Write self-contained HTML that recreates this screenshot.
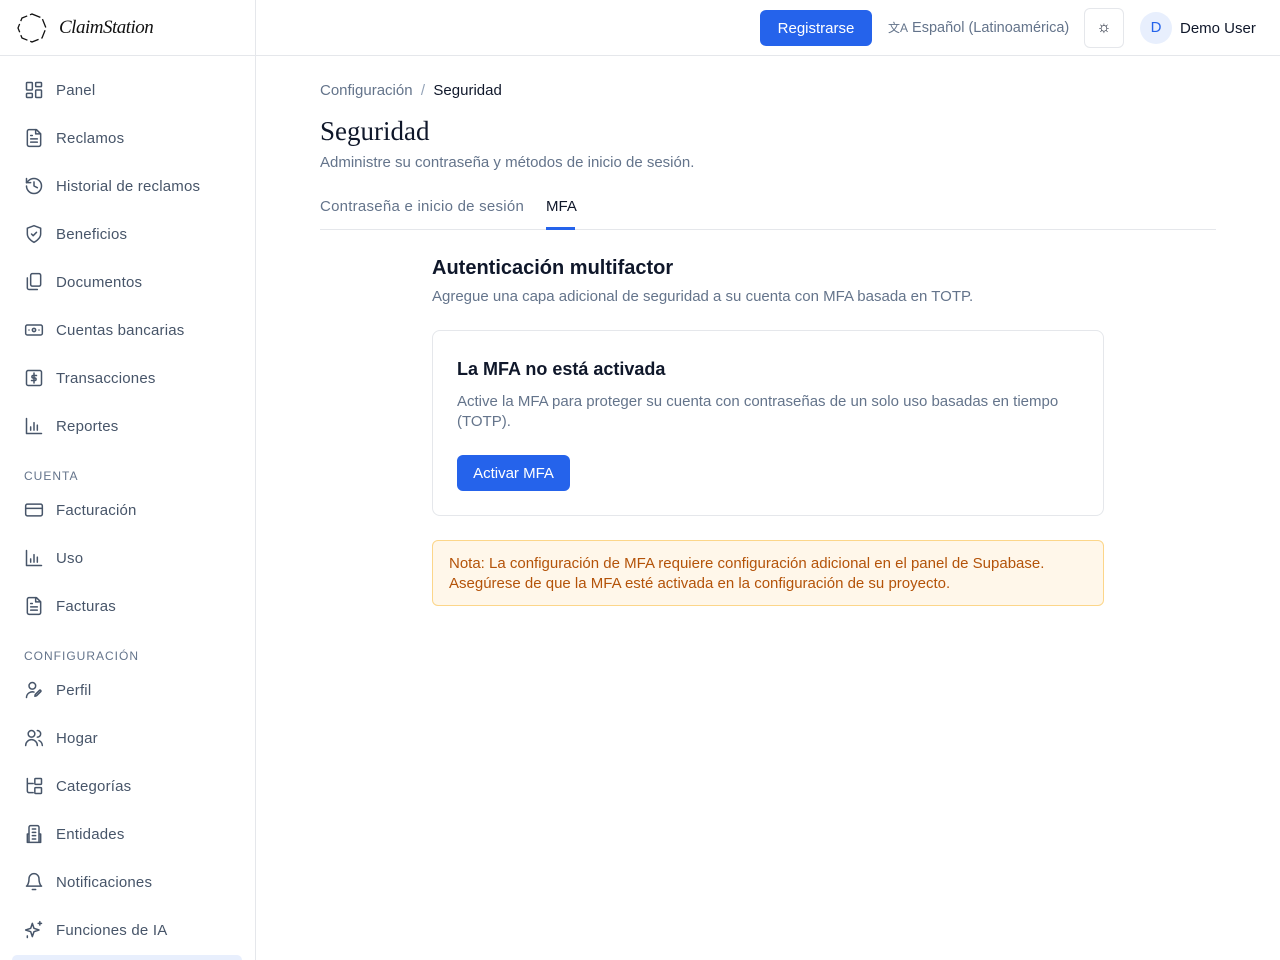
<!DOCTYPE html>
<html><head><meta charset="utf-8"><style>
*{box-sizing:border-box;margin:0;padding:0}
html,body{width:1280px;height:960px;overflow:hidden}
body{font-family:"Liberation Sans",sans-serif;background:#fff;color:#0f172a;position:relative}
.side{position:absolute;left:0;top:0;width:256px;height:960px;border-right:1px solid #e5e7eb;background:#fff;overflow:hidden}
.logo{height:56px;border-bottom:1px solid #e5e7eb;display:flex;align-items:center;padding-left:17px}
.logo span{font-family:"Liberation Serif",serif;font-style:italic;font-size:19px;margin-left:12px;color:#111;letter-spacing:-0.5px}
.item{position:absolute;left:24px;display:flex;align-items:center;font-size:15px;color:#475569;letter-spacing:.2px}
.item svg{width:20px;height:20px;margin-right:12px;fill:none;stroke:#475569;stroke-width:1.8;stroke-linecap:round;stroke-linejoin:round}
.sec{position:absolute;left:24px;font-size:12px;color:#64748b;letter-spacing:1px}
.top{position:absolute;left:256px;right:0;top:0;height:56px;border-bottom:1px solid #e5e7eb}
.btn{position:absolute;background:#2563eb;color:#fff;border-radius:6px;font-size:15px;display:flex;align-items:center;justify-content:center}
</style></head><body>
<div class="side">
<div class="logo"><svg width="30" height="30" viewBox="0 0 30 30"><path d="M15 1 L25 5 L29 15 L25 25 L15 29 L5 25 L1 15 L5 5 Z" fill="none" stroke="#111" stroke-width="1.3" stroke-dasharray="9 3"/></svg><span>ClaimStation</span></div>
<div class="item" style="top:80px"><svg viewBox="0 0 24 24"><rect x="3" y="3" width="7" height="9" rx="1"/><rect x="14" y="3" width="7" height="5" rx="1"/><rect x="14" y="12" width="7" height="9" rx="1"/><rect x="3" y="16" width="7" height="5" rx="1"/></svg>Panel</div>
<div class="item" style="top:128px"><svg viewBox="0 0 24 24"><path d="M15 2H6a2 2 0 0 0-2 2v16a2 2 0 0 0 2 2h12a2 2 0 0 0 2-2V7z"/><path d="M14 2v5h5M8 13h8M8 17h8M8 9h2"/></svg>Reclamos</div>
<div class="item" style="top:176px"><svg viewBox="0 0 24 24"><path d="M3 12a9 9 0 1 0 9-9 9.7 9.7 0 0 0-6.7 2.7L3 8"/><path d="M3 3v5h5M12 7v5l4 2"/></svg>Historial de reclamos</div>
<div class="item" style="top:224px"><svg viewBox="0 0 24 24"><path d="M12 22s8-4 8-10V5l-8-3-8 3v7c0 6 8 10 8 10z"/><path d="m9 12 2 2 4-4"/></svg>Beneficios</div>
<div class="item" style="top:272px"><svg viewBox="0 0 24 24"><rect x="8" y="2" width="12" height="15" rx="2"/><path d="M4 7v12a2 2 0 0 0 2 2h10"/></svg>Documentos</div>
<div class="item" style="top:320px"><svg viewBox="0 0 24 24"><rect x="2" y="6" width="20" height="12" rx="2"/><circle cx="12" cy="12" r="2"/><path d="M6 12h.01M18 12h.01"/></svg>Cuentas bancarias</div>
<div class="item" style="top:368px"><svg viewBox="0 0 24 24"><rect x="3" y="3" width="18" height="18" rx="2"/><path d="M12 6v12M15 9h-4a1.5 1.5 0 0 0 0 3h2a1.5 1.5 0 0 1 0 3H9"/></svg>Transacciones</div>
<div class="item" style="top:416px"><svg viewBox="0 0 24 24"><path d="M3 3v18h18M8 17v-4M12 17V8M16 17v-6"/></svg>Reportes</div>
<div class="sec" style="top:469px">CUENTA</div>
<div class="item" style="top:500px"><svg viewBox="0 0 24 24"><rect x="2" y="5" width="20" height="14" rx="2"/><path d="M2 10h20"/></svg>Facturación</div>
<div class="item" style="top:548px"><svg viewBox="0 0 24 24"><path d="M3 3v18h18M8 17v-4M12 17V8M16 17v-6"/></svg>Uso</div>
<div class="item" style="top:596px"><svg viewBox="0 0 24 24"><path d="M15 2H6a2 2 0 0 0-2 2v16a2 2 0 0 0 2 2h12a2 2 0 0 0 2-2V7z"/><path d="M14 2v5h5M8 13h8M8 17h8M8 9h2"/></svg>Facturas</div>
<div class="sec" style="top:649px">CONFIGURACIÓN</div>
<div class="item" style="top:680px"><svg viewBox="0 0 24 24"><circle cx="10" cy="7" r="4"/><path d="M3 21a7 7 0 0 1 9-6.5M20 14l-5 5-2 .5.5-2 5-5a1 1 0 0 1 1.5 1.5z"/></svg>Perfil</div>
<div class="item" style="top:728px"><svg viewBox="0 0 24 24"><circle cx="9" cy="7" r="4"/><path d="M2 21a7 7 0 0 1 14 0M16 3a4 4 0 0 1 0 8M22 21a7 7 0 0 0-4-6"/></svg>Hogar</div>
<div class="item" style="top:776px"><svg viewBox="0 0 24 24"><path d="M4 3v15a2 2 0 0 0 2 2h5M4 9h7"/><rect x="13" y="3" width="8" height="7" rx="1"/><rect x="13" y="14" width="8" height="7" rx="1"/></svg>Categorías</div>
<div class="item" style="top:824px"><svg viewBox="0 0 24 24"><path d="M6 22V4a2 2 0 0 1 2-2h8a2 2 0 0 1 2 2v18zM6 12H4v10h16V12h-2M10 6h4M10 10h4M10 14h4M10 18h4"/></svg>Entidades</div>
<div class="item" style="top:872px"><svg viewBox="0 0 24 24"><path d="M6 8a6 6 0 0 1 12 0c0 7 3 9 3 9H3s3-2 3-9M10 21h4"/></svg>Notificaciones</div>
<div class="item" style="top:920px"><svg viewBox="0 0 24 24"><path d="M10 4l2 6 6 2-6 2-2 6-2-6-6-2 6-2zM19 2v4M17 4h4M4 19v2"/></svg>Funciones de IA</div>
<div style="position:absolute;left:12px;top:955px;width:230px;height:10px;background:#e8effd;border-radius:8px"></div>
</div>
<div class="top">
<div class="btn" style="left:504px;top:10px;width:112px;height:36px">Registrarse</div>
<div style="position:absolute;left:632px;top:19px;font-size:14.5px;color:#64748b;white-space:nowrap"><span style="font-size:12px">文A</span> Español (Latinoamérica)</div>
<div style="position:absolute;left:828px;top:8px;width:40px;height:40px;border:1px solid #e5e7eb;border-radius:6px;text-align:center;line-height:38px;font-size:16px;background:#fff">☼</div>
<div style="position:absolute;left:884px;top:12px;width:32px;height:32px;border-radius:50%;background:#e8effd;color:#2563eb;text-align:center;line-height:32px;font-size:15px">D</div>
<div style="position:absolute;left:924px;top:20px;font-size:15px;color:#0f172a">Demo User</div>
</div>
<div style="position:absolute;left:320px;top:82px;font-size:15px;color:#64748b">Configuración &nbsp;<span style="color:#94a3b8">/</span>&nbsp; <span style="color:#0f172a">Seguridad</span></div>
<div style="position:absolute;left:320px;top:116px;font-family:'Liberation Serif',serif;font-size:27px;color:#0f172a">Seguridad</div>
<div style="position:absolute;left:320px;top:154px;font-size:15px;color:#64748b">Administre su contraseña y métodos de inicio de sesión.</div>
<div style="position:absolute;left:320px;top:229px;width:896px;height:1px;background:#e5e7eb"></div>
<div style="position:absolute;left:320px;top:198px;font-size:15px;color:#64748b;letter-spacing:.25px">Contraseña e inicio de sesión</div>
<div style="position:absolute;left:546px;top:198px;font-size:15px;color:#0f172a">MFA</div>
<div style="position:absolute;left:546px;top:227px;width:29px;height:3px;background:#2563eb"></div>
<div style="position:absolute;left:432px;top:257px;font-size:20px;font-weight:bold;color:#0f172a">Autenticación multifactor</div>
<div style="position:absolute;left:432px;top:288px;font-size:15px;color:#64748b">Agregue una capa adicional de seguridad a su cuenta con MFA basada en TOTP.</div>
<div style="position:absolute;left:432px;top:330px;width:672px;height:186px;border:1px solid #e5e7eb;border-radius:8px">
<div style="position:absolute;left:24px;top:28px;font-size:18px;font-weight:bold">La MFA no está activada</div>
<div style="position:absolute;left:24px;top:61px;right:24px;font-size:15px;color:#64748b;line-height:20px">Active la MFA para proteger su cuenta con contraseñas de un solo uso basadas en tiempo (TOTP).</div>
<div class="btn" style="left:24px;top:124px;width:113px;height:36px">Activar MFA</div>
</div>
<div style="position:absolute;left:432px;top:540px;width:672px;height:66px;border:1px solid #fcd68a;background:#fff7ea;border-radius:6px;padding:13px 16px;font-size:15px;line-height:20px;color:#b45309">Nota: La configuración de MFA requiere configuración adicional en el panel de Supabase. Asegúrese de que la MFA esté activada en la configuración de su proyecto.</div>
</body></html>
